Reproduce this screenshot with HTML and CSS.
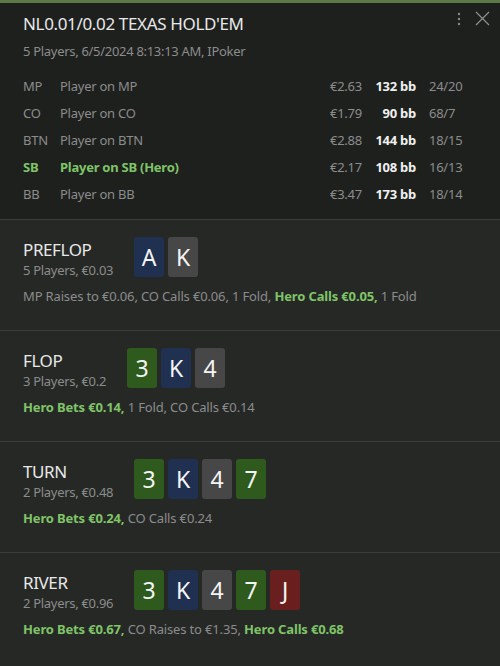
FILE: index.html
```html
<!DOCTYPE html>
<html>
<head>
<meta charset="utf-8">
<link rel="stylesheet" href="styles.css">
</head>
<body>
<div class="panel">
  <header class="header">
    <div class="icons">
      <svg class="kebab" width="6" height="14" viewBox="0 0 6 14"><circle cx="3" cy="2" r="1.2"/><circle cx="3" cy="7" r="1.2"/><circle cx="3" cy="12" r="1.2"/></svg>
      <svg class="close" width="15" height="15" viewBox="0 0 15 15"><path d="M1 1 L14 14 M14 1 L1 14"/></svg>
    </div>
    <h1 class="title">NL0.01/0.02 TEXAS HOLD'EM</h1>
    <div class="subtitle">5 Players, 6/5/2024 8:13:13 AM, IPoker</div>
    <div class="players">
      <div class="prow"><span class="pos">MP</span><span class="name">Player on MP</span><span class="amt">€2.63</span><span class="bb">132 bb</span><span class="stat">24/20</span></div>
      <div class="prow"><span class="pos">CO</span><span class="name">Player on CO</span><span class="amt">€1.79</span><span class="bb">90 bb</span><span class="stat">68/7</span></div>
      <div class="prow"><span class="pos">BTN</span><span class="name">Player on BTN</span><span class="amt">€2.88</span><span class="bb">144 bb</span><span class="stat">18/15</span></div>
      <div class="prow hero"><span class="pos">SB</span><span class="name">Player on SB (Hero)</span><span class="amt">€2.17</span><span class="bb">108 bb</span><span class="stat">16/13</span></div>
      <div class="prow"><span class="pos">BB</span><span class="name">Player on BB</span><span class="amt">€3.47</span><span class="bb">173 bb</span><span class="stat">18/14</span></div>
    </div>
  </header>

  <section class="street">
    <div class="street-top">
      <div class="street-info">
        <div class="street-name">PREFLOP</div>
        <div class="street-sub">5 Players, €0.03</div>
      </div>
      <div class="cards"><span class="card blue">A</span><span class="card gray">K</span></div>
    </div>
    <div class="actions">MP Raises to €0.06, CO Calls €0.06, 1 Fold, <b class="hero-act">Hero Calls €0.05,</b> 1 Fold</div>
  </section>

  <section class="street">
    <div class="street-top">
      <div class="street-info">
        <div class="street-name">FLOP</div>
        <div class="street-sub">3 Players, €0.2</div>
      </div>
      <div class="cards"><span class="card green">3</span><span class="card blue">K</span><span class="card gray">4</span></div>
    </div>
    <div class="actions"><b class="hero-act">Hero Bets €0.14,</b> 1 Fold, CO Calls €0.14</div>
  </section>

  <section class="street">
    <div class="street-top">
      <div class="street-info">
        <div class="street-name">TURN</div>
        <div class="street-sub">2 Players, €0.48</div>
      </div>
      <div class="cards"><span class="card green">3</span><span class="card blue">K</span><span class="card gray">4</span><span class="card green">7</span></div>
    </div>
    <div class="actions"><b class="hero-act">Hero Bets €0.24,</b> CO Calls €0.24</div>
  </section>

  <section class="street">
    <div class="street-top">
      <div class="street-info">
        <div class="street-name">RIVER</div>
        <div class="street-sub">2 Players, €0.96</div>
      </div>
      <div class="cards"><span class="card green">3</span><span class="card blue">K</span><span class="card gray">4</span><span class="card green">7</span><span class="card red">J</span></div>
    </div>
    <div class="actions"><b class="hero-act">Hero Bets €0.67,</b> CO Raises to €1.35, <b class="hero-act">Hero Calls €0.68</b></div>
  </section>
</div>
</body>
</html>
```

FILE: styles.css
```css
* { box-sizing: border-box; }
html, body { margin: 0; padding: 0; }
body {
  background: #262826;
  font-family: "Noto Sans", "Open Sans", sans-serif;
  color: #e6e6e6;
}
.panel {
  width: 500px;
  height: 666px;
  overflow: hidden;
  background: #262826;
}
.header {
  position: relative;
  background: #1e201e;
  border-top: 3px solid #5a7a4a;
  padding: 9px 0 0 23px;
  height: 219px;
}
.icons {
  position: absolute;
  top: 8px;
  right: 10px;
  display: flex;
  align-items: center;
  gap: 13px;
}
.kebab { fill: #8a8a8a; }
.close { stroke: #8f8f8f; stroke-width: 1.2; fill: none; }
.title {
  margin: 0;
  font-size: 17px;
  font-weight: 400;
  letter-spacing: -0.35px;
  line-height: 24px;
  color: #e8e8e8;
}
.subtitle {
  margin-top: 6px;
  font-size: 13px;
  letter-spacing: -0.3px;
  line-height: 18px;
  color: #8c8c8c;
}
.players {
  margin-top: 12px;
}
.prow {
  display: grid;
  grid-template-columns: 37px 270px 40px 46px auto;
  height: 27px;
  align-items: center;
  font-size: 13px;
  letter-spacing: -0.25px;
  color: #8c8c8c;
}
.prow .bb {
  text-align: right;
  font-weight: 700;
  color: #f0f0f0;
}
.prow .stat { padding-left: 13px; }
.prow.hero .pos, .prow.hero .name {
  color: #7fc467;
  font-weight: 700;
}
.street {
  border-top: 1px solid #3a3d3a;
  height: 111px;
  padding: 17px 23px 0;
}
.street-top {
  display: flex;
  align-items: flex-start;
  gap: 21px;
}
.street-info { padding-top: 2px; }
.street-name {
  font-size: 17px;
  letter-spacing: -0.4px;
  line-height: 22px;
  color: #e8e8e8;
}
.street-sub {
  font-size: 13px;
  letter-spacing: -0.3px;
  line-height: 18px;
  color: #8c8c8c;
}
.cards {
  display: flex;
  gap: 4px;
}
.card {
  width: 30px;
  height: 40px;
  border-radius: 3px;
  display: flex;
  align-items: center;
  justify-content: center;
  font-size: 23px;
  color: #f4f4f4;
}
.card.blue { background: #1f3050; }
.card.gray { background: #474747; }
.card.green { background: #2f5a1e; }
.card.red { background: #6a1f1f; }
.actions {
  margin-top: 8px;
  font-size: 13px;
  letter-spacing: -0.15px;
  line-height: 18px;
  color: #8c8c8c;
}
.hero-act {
  color: #7fc467;
  font-weight: 700;
}
```
